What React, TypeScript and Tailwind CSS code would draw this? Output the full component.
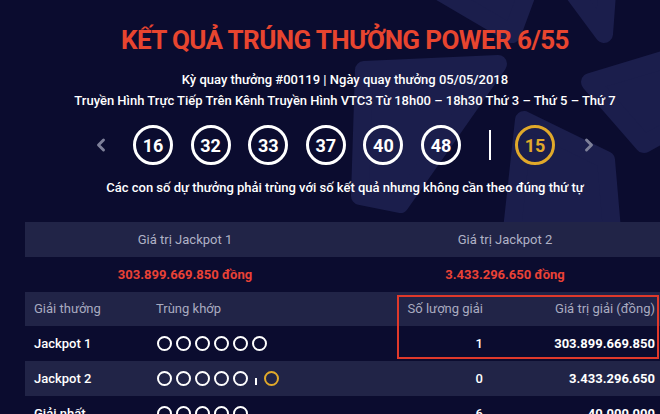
import React from 'react';
import { ChevronLeft, ChevronRight } from 'lucide-react';

const BALLS = ['16', '32', '33', '37', '40', '48'];

const Ring = ({ gold = false }: { gold?: boolean }) => (
  <span
    className={`inline-block w-[15px] h-[15px] rounded-full border-[2.5px] ${gold ? 'border-[#e1a92a]' : 'border-white'}`}
  />
);

const Logo = () => (
  <svg className="absolute left-0 top-0" width="660" height="414" viewBox="0 0 660 414">
    <g fill="#1b1e4c" stroke="#1b1e4c" strokeWidth="18" strokeLinejoin="round">
      <polygon points="420,-20 532,-20 512,34" />
      <polygon points="564,-20 608,-20 604,34" />
      <polygon points="590,82 670,58 670,130 644,144" />
      <polygon points="524,120 606,160 612,230 512,230" />
      <polygon points="364,70 498,64 400,204 360,196" />
    </g>
  </svg>
);

export default function App() {
  return (
    <div className="relative w-[660px] h-[414px] overflow-hidden bg-[#0b0c2f] font-['Roboto',sans-serif]">
      <Logo />

      <div className="relative flex flex-col items-center w-[640px] ml-[25px]">
        <h1 className="mt-[25px] h-[30px] leading-[30px] text-[26px] font-bold tracking-[-0.6px] text-[#e8452f]">
          KẾT QUẢ TRÚNG THƯỞNG POWER 6/55
        </h1>
        <div className="mt-[15px] h-[20px] leading-[20px] text-[13px] font-medium text-white">
          Kỳ quay thưởng #00119 | Ngày quay thưởng 05/05/2018
        </div>
        <div className="mt-[1px] h-[20px] leading-[20px] text-[13px] font-medium text-white">
          Truyền Hình Trực Tiếp Trên Kênh Truyền Hình VTC3 Từ 18h00 – 18h30 Thứ 3 – Thứ 5 – Thứ 7
        </div>

        {/* Balls */}
        <div className="mt-[14px] h-[40px] flex items-center">
          <ChevronLeft size={20} strokeWidth={3.5} className="text-[#7e8099] mr-[22px]" />
          <div className="flex gap-[17.6px]">
            {BALLS.map(b => (
              <div
                key={b}
                className="w-[40px] h-[40px] rounded-full border-[3px] border-white flex items-center justify-center text-white text-[18px] font-bold"
              >
                {b}
              </div>
            ))}
          </div>
          <div className="w-[2px] h-[30px] bg-white ml-[28px] mr-[24px]" />
          <div className="w-[40px] h-[40px] rounded-full border-[3px] border-[#e1a92a] flex items-center justify-center text-[#e1a92a] text-[18px] font-bold">
            15
          </div>
          <ChevronRight size={20} strokeWidth={3.5} className="text-[#7e8099] ml-[24px]" />
        </div>

        <div className="mt-[13px] h-[20px] leading-[20px] text-[13px] font-medium text-white">
          Các con số dự thưởng phải trùng với số kết quả nhưng không cần theo đúng thứ tự
        </div>
      </div>

      {/* Jackpot values */}
      <div className="relative w-[640px] ml-[25px] mt-[24px]">
        <div className="grid grid-cols-2 h-[35px] bg-[#212447] text-[13px] text-[#b0b2c6] items-center text-center">
          <div>Giá trị Jackpot 1</div>
          <div>Giá trị Jackpot 2</div>
        </div>
        <div className="grid grid-cols-2 h-[35px] bg-[#0b0c2f] text-[13px] font-bold text-[#ea4236] items-center text-center">
          <div>303.899.669.850 đồng</div>
          <div>3.433.296.650 đồng</div>
        </div>

        {/* Prize table */}
        <div className="grid grid-cols-[122px_251px_92px_175px] h-[34px] bg-[#212447] text-[13px] text-[#a9abc0] items-center">
          <div className="pl-[9px]">Giải thưởng</div>
          <div className="pl-[9px]">Trùng khớp</div>
          <div className="text-right pr-[7px]">Số lượng giải</div>
          <div className="text-right pr-[10px]">Giá trị giải (đồng)</div>
        </div>
        <div className="grid grid-cols-[122px_251px_92px_175px] h-[35px] bg-[#0b0c2f] text-[13px] text-white items-center">
          <div className="pl-[9px] font-medium">Jackpot 1</div>
          <div className="pl-[10px] flex gap-[4px]">
            {[0, 1, 2, 3, 4, 5].map(i => <Ring key={i} />)}
          </div>
          <div className="text-right pr-[7px] font-medium">1</div>
          <div className="text-right pr-[10px] font-bold">303.899.669.850</div>
        </div>
        <div className="grid grid-cols-[122px_251px_92px_175px] h-[35px] bg-[#212447] text-[13px] text-white items-center">
          <div className="pl-[9px] font-medium">Jackpot 2</div>
          <div className="pl-[10px] flex items-center gap-[4px]">
            {[0, 1, 2, 3, 4].map(i => <Ring key={i} />)}
            <span className="w-[2px] h-[7px] bg-white mx-[3px] self-end mb-[1px]" />
            <Ring gold />
          </div>
          <div className="text-right pr-[7px] font-medium">0</div>
          <div className="text-right pr-[10px] font-bold">3.433.296.650</div>
        </div>
        <div className="grid grid-cols-[122px_251px_92px_175px] h-[35px] bg-[#0b0c2f] text-[13px] text-white items-center">
          <div className="pl-[9px] font-medium">Giải nhất</div>
          <div className="pl-[10px] flex gap-[4px]">
            {[0, 1, 2, 3, 4].map(i => <Ring key={i} />)}
          </div>
          <div className="text-right pr-[7px] font-medium">6</div>
          <div className="text-right pr-[10px] font-bold">40.000.000</div>
        </div>
      </div>

      {/* annotation box */}
      <div className="absolute left-[397px] top-[295px] w-[262px] h-[64px] border-2 border-[#e0392b]" />
    </div>
  );
}
